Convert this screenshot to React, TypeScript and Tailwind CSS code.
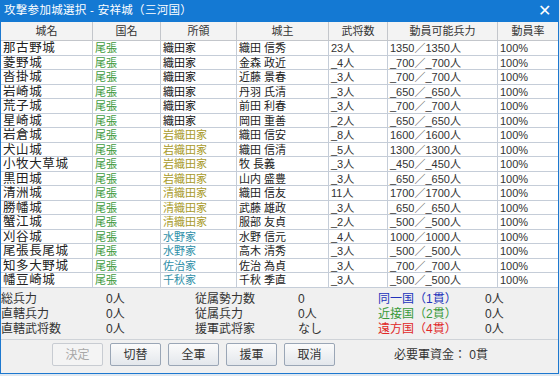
import React from "react";

type Row = [string, string, string, string, string, string];

const rows: Row[] = [
  ["那古野城", "織田家", "織田 信秀", "23人", "1350／1350人", "k"],
  ["菱野城", "織田家", "金森 政近", "_4人", "_700／_700人", "k"],
  ["沓掛城", "織田家", "近藤 景春", "_3人", "_700／_700人", "k"],
  ["岩崎城", "織田家", "丹羽 氏清", "_3人", "_650／_650人", "k"],
  ["荒子城", "織田家", "前田 利春", "_3人", "_700／_700人", "k"],
  ["星崎城", "織田家", "岡田 重善", "_2人", "_650／_650人", "k"],
  ["岩倉城", "岩織田家", "織田 信安", "_8人", "1600／1600人", "o"],
  ["犬山城", "岩織田家", "織田 信清", "_5人", "1300／1300人", "o"],
  ["小牧大草城", "岩織田家", "牧 長義", "_3人", "_450／_450人", "o"],
  ["黒田城", "岩織田家", "山内 盛豊", "_3人", "_650／_650人", "o"],
  ["清洲城", "清織田家", "織田 信友", "11人", "1700／1700人", "o"],
  ["勝幡城", "清織田家", "武藤 雄政", "_3人", "_650／_650人", "o"],
  ["蟹江城", "清織田家", "服部 友貞", "_2人", "_500／_500人", "o"],
  ["刈谷城", "水野家", "水野 信元", "_4人", "1000／1000人", "t"],
  ["尾張長尾城", "水野家", "高木 清秀", "_3人", "_500／_500人", "t"],
  ["知多大野城", "佐治家", "佐治 為貞", "_3人", "_700／_700人", "t"],
  ["幡豆崎城", "千秋家", "千秋 季直", "_3人", "_500／_500人", "t"],
];

const headers = ["城名", "国名", "所領", "城主", "武将数", "動員可能兵力", "動員率"];

const font = { fontFamily: '"Liberation Sans", "Noto Sans CJK JP", sans-serif' };

function ownerColor(k: string) {
  if (k === "o") return "text-[#a89a2a]";
  if (k === "t") return "text-[#2f8fa8]";
  return "text-[#111]";
}

export default function App() {
  return (
    <div className="w-[560px] h-[376px] bg-[#dfe8f1] overflow-hidden" style={font}>
      <div className="w-[559px] h-[374px] flex flex-col border-x border-b border-[#1d78cf] bg-[#f0f0f0]">
        {/* title bar */}
        <div className="h-[22px] -mx-px bg-[#1479d3] flex items-center justify-between pl-[4px] pr-[8px]">
          <span className="text-white text-[11.5px] leading-none tracking-[0.3px]">
            攻撃参加城選択 - 安祥城（三河国）
          </span>
          <span className="text-white text-[16px] leading-none font-light">✕</span>
        </div>
        {/* table */}
        <div className="bg-white grid grid-cols-[92px_68px_76px_92px_59px_110px_60px] text-[#333]">
          {headers.map((h, i) => (
            <div
              key={h}
              className={`h-[19px] flex items-center justify-center text-[11px] bg-[#f3f3f3] border-b border-[#b9bcc2] ${
                i < 6 ? "border-r" : ""
              } border-[#c3c6cb] text-[#333]`}
            >
              {h}
            </div>
          ))}
          {rows.map((r) => (
            <React.Fragment key={r[0]}>
              <div className="h-[14.5px] leading-[14px] border-r border-b border-[#c5cdd8] pl-[2px] text-[12.5px] tracking-[0.6px] text-[#222] whitespace-nowrap overflow-hidden">
                {r[0]}
              </div>
              <div className="h-[14.5px] leading-[14px] border-r border-b border-[#c5cdd8] pl-[2px] text-[11px] text-[#3e9a3e]">
                尾張
              </div>
              <div className={`h-[14.5px] leading-[14px] border-r border-b border-[#c5cdd8] pl-[2px] text-[11px] ${ownerColor(r[5])}`}>
                {r[1]}
              </div>
              <div className="h-[14.5px] leading-[14px] border-r border-b border-[#c5cdd8] pl-[2px] text-[11px] text-[#222] whitespace-nowrap">
                {r[2]}
              </div>
              <div className="h-[14.5px] leading-[14px] border-r border-b border-[#c5cdd8] pl-[2px] text-[11px] text-[#333]">
                {r[3]}
              </div>
              <div className="h-[14.5px] leading-[14px] border-r border-b border-[#c5cdd8] pl-[2px] text-[11px] text-[#333] whitespace-nowrap">
                {r[4]}
              </div>
              <div className="h-[14.5px] leading-[14px] border-b border-[#c5cdd8] pl-[2px] text-[11px] text-[#333]">
                100%
              </div>
            </React.Fragment>
          ))}
        </div>
        {/* summary */}
        <div className="pt-[4px] grid grid-cols-[105px_89px_103px_80px_107px_1fr] text-[12px] leading-[15.3px] text-[#333]">
          <div>総兵力</div>
          <div>0人</div>
          <div>従属勢力数</div>
          <div>0</div>
          <div className="text-[#2233bb]">同一国（1貫）</div>
          <div>0人</div>
          <div>直轄兵力</div>
          <div>0人</div>
          <div>従属兵力</div>
          <div>0人</div>
          <div className="text-[#3a9a3a]">近接国（2貫）</div>
          <div>0人</div>
          <div>直轄武将数</div>
          <div>0人</div>
          <div>援軍武将家</div>
          <div>なし</div>
          <div className="text-[#e02828]">遠方国（4貫）</div>
          <div>0人</div>
        </div>
        <div className="mt-[2px] h-px bg-[#cfd3d8]" />
        {/* buttons */}
        <div className="flex items-center pl-[51px] pt-[3px] gap-[7px] text-[12px]">
          {["決定", "切替", "全軍", "援軍", "取消"].map((b, i) => (
            <div
              key={b}
              className={`w-[51px] h-[23px] flex items-center justify-center rounded-[2px] border ${
                i === 0
                  ? "border-[#c8ccd2] text-[#a8a8a8] bg-[#f4f4f4]"
                  : "border-[#9aa6b6] text-[#333] bg-gradient-to-b from-[#fbfbfb] to-[#e3e7ec]"
              }`}
            >
              {b}
            </div>
          ))}
          <div className="ml-[52px] text-[#333]">必要軍資金： 0貫</div>
        </div>
      </div>
    </div>
  );
}
